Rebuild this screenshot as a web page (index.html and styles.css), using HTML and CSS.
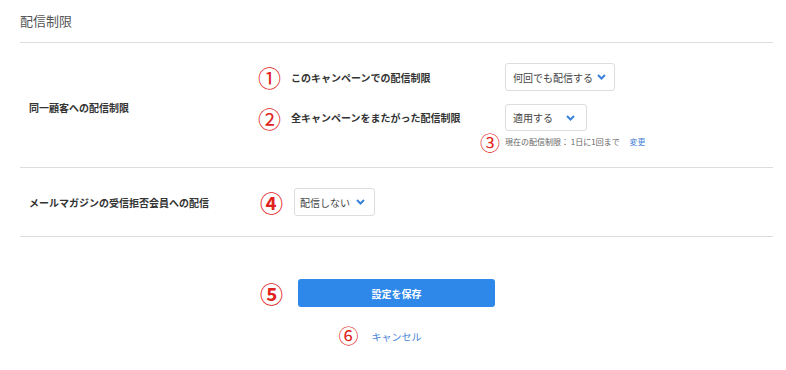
FILE: index.html
```html
<!DOCTYPE html>
<html lang="ja">
<head>
    <meta charset="UTF-8">
    <meta name="viewport" content="width=device-width, initial-scale=1.0">
    <title>配信制限</title>
    <link rel="stylesheet" href="styles.css">
</head>
<body>
    <div class="page">
        <h2 class="page-title">配信制限</h2>

        <div class="section limits">
            <div class="label limits-label">同一顧客への配信制限</div>

            <span class="mark row-1">①</span>
            <div class="field-name row-1">このキャンペーンでの配信制限</div>
            <div class="select select-wide row-1">
                <span>何回でも配信する</span>
                <svg class="chevron" width="9" height="6" viewBox="0 0 9 6"><polyline points="1,1 4.5,4.5 8,1" /></svg>
            </div>

            <span class="mark row-2">②</span>
            <div class="field-name row-2">全キャンペーンをまたがった配信制限</div>
            <div class="select row-2">
                <span>適用する</span>
                <svg class="chevron" width="9" height="6" viewBox="0 0 9 6"><polyline points="1,1 4.5,4.5 8,1" /></svg>
            </div>

            <span class="mark mark-note row-3">③</span>
            <div class="note row-3">現在の配信制限： 1日に1回まで <a class="link">変更</a></div>
        </div>

        <div class="section optout">
            <div class="label">メールマガジンの受信拒否会員への配信</div>
            <span class="mark bold">④</span>
            <div class="select">
                <span>配信しない</span>
                <svg class="chevron" width="9" height="6" viewBox="0 0 9 6"><polyline points="1,1 4.5,4.5 8,1" /></svg>
            </div>
        </div>

        <div class="actions">
            <span class="mark bold">⑤</span>
            <div class="action-col">
                <button class="save-button">設定を保存</button>
                <div class="cancel-line">
                    <span class="mark mark-cancel">⑥</span>
                    <a class="link cancel">キャンセル</a>
                    <span></span>
                </div>
            </div>
        </div>
    </div>
</body>
</html>
```

FILE: styles.css
```css
body {
    margin: 0;
    background-color: #fff;
    color: #333;
    font-family: "Noto Sans CJK JP", "Noto Sans", sans-serif;
}
.page {
    padding: 0 13px 0 20px;
}
.page-title {
    margin: 0;
    padding: 12px 0 12px 0;
    font-size: 13px;
    font-weight: normal;
    line-height: 18px;
    color: #555;
    border-bottom: 1px solid #ddd;
}
.section {
    border-bottom: 1px solid #ddd;
}
.label {
    padding-left: 9px;
    font-size: 10px;
    font-weight: bold;
    color: #333;
}
.mark {
    font-size: 23px;
    line-height: 20px;
    color: #e0231c;
}
.mark.bold {
    font-weight: bold;
}
.limits {
    display: grid;
    grid-template-columns: 238px 33px 214px auto;
    grid-template-rows: 28px 13px 27px 20px;
    align-items: center;
    padding: 20px 0 16px;
}
.row-1 { grid-row: 1; }
.row-2 { grid-row: 3; }
.row-3 { grid-row: 4; }
.limits-label {
    grid-row: 1 / span 4;
    grid-column: 1;
    align-self: center;
}
.field-name {
    font-size: 10px;
    font-weight: bold;
}
.select {
    display: flex;
    align-items: center;
    justify-content: space-between;
    box-sizing: border-box;
    width: 82px;
    height: 27px;
    padding: 0 11px 0 7px;
    border: 1px solid #ddd;
    border-radius: 3px;
    font-size: 10px;
    color: #444;
}
.select-wide {
    width: 110px;
    height: 28px;
    padding-right: 8px;
}
.chevron {
    fill: none;
    stroke: #3a82dc;
    stroke-width: 2;
}
.mark-note {
    grid-column: 3;
    justify-self: end;
    margin-right: 5px;
    margin-top: 4px;
    font-size: 20px;
}
.note {
    grid-column: 4;
    font-size: 8px;
    color: #666;
}
.link {
    margin-left: 8px;
    color: #4a84d6;
    cursor: pointer;
}
.optout {
    display: flex;
    align-items: center;
    padding: 20px 0;
}
.optout .label {
    width: 231px;
}
.optout .mark {
    width: 34px;
}
.optout .select {
    width: 81px;
    height: 28px;
    padding: 0 9px 0 5px;
}
.actions {
    display: flex;
    align-items: flex-start;
    padding: 42px 0 0 240px;
}
.actions > .mark {
    width: 38px;
    margin-top: 4px;
}
.action-col {
    display: flex;
    flex-direction: column;
    width: 197px;
}
.save-button {
    height: 28px;
    border: none;
    border-radius: 3px;
    background-color: #2e88ea;
    color: #fff;
    font-family: inherit;
    font-size: 10px;
    font-weight: bold;
    cursor: pointer;
}
.cancel-line {
    display: grid;
    grid-template-columns: 1fr auto 1fr;
    align-items: center;
    margin-top: 19px;
}
.mark-cancel {
    justify-self: end;
    margin-right: 13px;
    font-size: 20px;
}
.cancel {
    margin-left: 0;
    font-size: 10px;
}
```
